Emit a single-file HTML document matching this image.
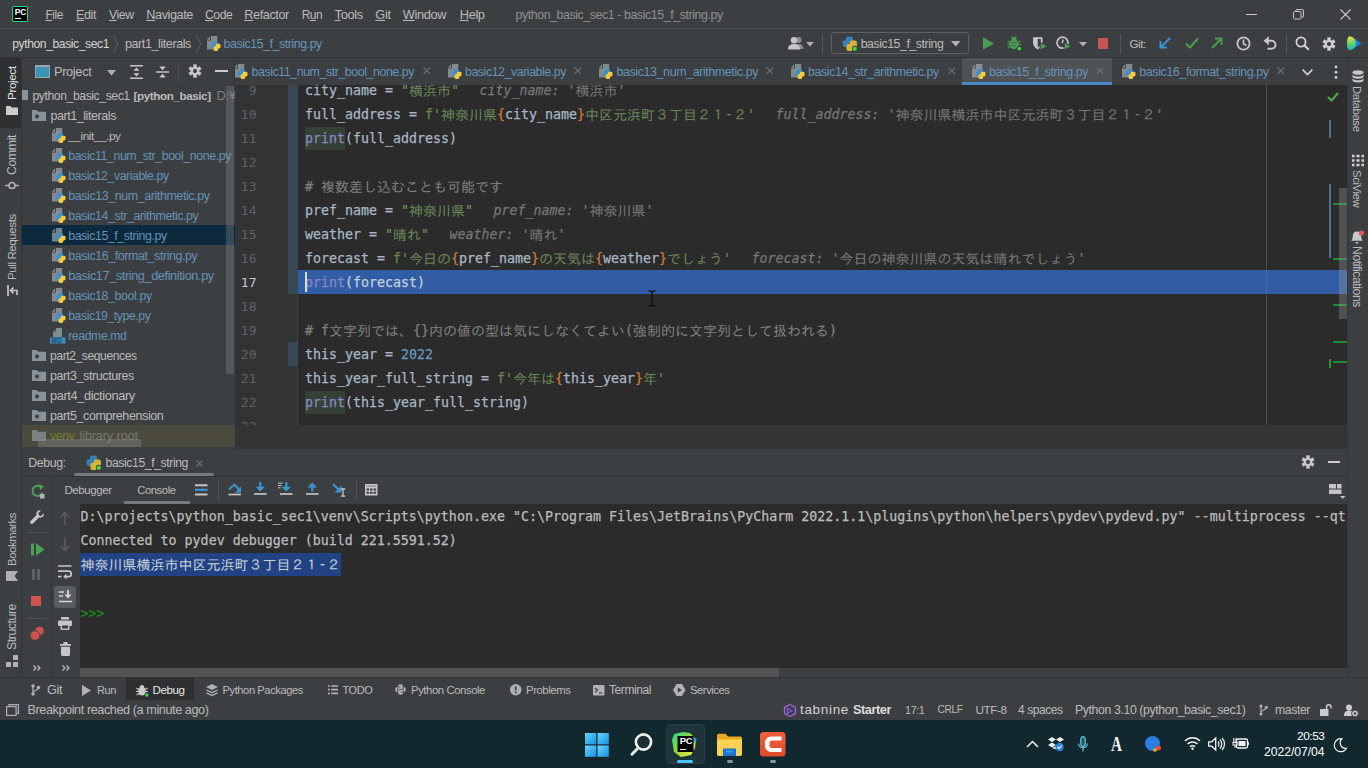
<!DOCTYPE html>
<html lang="ja">
<head>
<meta charset="utf-8">
<title>python_basic_sec1 - basic15_f_string.py</title>
<style>
*{box-sizing:border-box;margin:0;padding:0}
html,body{width:1368px;height:768px;overflow:hidden;background:#3c3f41}
body{position:relative;font-family:"Liberation Sans","Noto Sans CJK JP",sans-serif;font-size:12.5px;color:#bbbbbb;line-height:1}
.abs{position:absolute}
.t{position:absolute;white-space:nowrap;line-height:16px;height:16px}
u{text-decoration:underline;text-underline-offset:1px;text-decoration-thickness:1px}
svg{position:absolute;overflow:visible}
.ln{position:absolute;text-align:right;font-family:"DejaVu Sans Mono","Liberation Mono",monospace;font-size:13px;color:#606366;height:24px;line-height:26px;letter-spacing:0}
.cl{position:absolute;left:70px;height:24px;line-height:26px;white-space:pre;font-family:"DejaVu Sans Mono","Liberation Mono","Noto Sans CJK JP",monospace;font-size:13.29px;letter-spacing:0;color:#a9b7c6;-webkit-text-stroke:0.25px}
.j{font-family:"Liberation Mono","IPAGothic","Noto Sans CJK JP",monospace;font-size:14px;letter-spacing:0;font-weight:400;line-height:0;vertical-align:-0.5px;-webkit-text-stroke:0}
.s{color:#6a8759}.k{color:#cc7832}.c{color:#808080}.n{color:#6897bb}.b{color:#8888c6}
.iv{color:#787878;font-style:italic}
.ivv{color:#787878}
.con{position:absolute;left:80px;height:24px;line-height:26px;white-space:pre;font-family:"DejaVu Sans Mono","Liberation Mono","Noto Sans CJK JP",monospace;font-size:13.29px;letter-spacing:0.012px;color:#bbbbbb;-webkit-text-stroke:0.25px}
</style>
</head>
<body>
<div class="abs" style="left:0.0px;top:0.0px;width:1368.0px;height:29.0px;background:#3c3f41;"></div>
<div class="abs" style="left:12.0px;top:6.0px;width:16.0px;height:16.0px;background:#000;border:1px solid #21d789;border-radius:1px"></div>
<div id="t0" class="t" style="left:14.8px;top:8.3px;color:#ffffff;font-size:8.6px;font-weight:700;letter-spacing:-0.277px;line-height:9px;height:9px;">PC</div>
<div class="abs" style="left:14.9px;top:17.6px;width:5.8px;height:1.3px;background:#ffffff;"></div>
<div id="t1" class="t" style="left:45.4px;top:6.8px;color:#bbbbbb;font-size:11.96px;font-weight:400;letter-spacing:-0.420px;line-height:16px;height:16px;"><u>F</u>ile</div>
<div id="t2" class="t" style="left:76.0px;top:6.8px;color:#bbbbbb;font-size:12.58px;font-weight:400;letter-spacing:-0.420px;line-height:16px;height:16px;"><u>E</u>dit</div>
<div id="t3" class="t" style="left:109.0px;top:6.8px;color:#bbbbbb;font-size:12.23px;font-weight:400;letter-spacing:-0.420px;line-height:16px;height:16px;"><u>V</u>iew</div>
<div id="t4" class="t" style="left:146.3px;top:6.8px;color:#bbbbbb;font-size:12.68px;font-weight:400;letter-spacing:-0.420px;line-height:16px;height:16px;"><u>N</u>avigate</div>
<div id="t5" class="t" style="left:205.0px;top:6.8px;color:#bbbbbb;font-size:12.16px;font-weight:400;letter-spacing:-0.420px;line-height:16px;height:16px;"><u>C</u>ode</div>
<div id="t6" class="t" style="left:244.3px;top:6.8px;color:#bbbbbb;font-size:12.69px;font-weight:400;letter-spacing:-0.420px;line-height:16px;height:16px;"><u>R</u>efactor</div>
<div id="t7" class="t" style="left:301.7px;top:6.8px;color:#bbbbbb;font-size:11.85px;font-weight:400;letter-spacing:-0.420px;line-height:16px;height:16px;">R<u>u</u>n</div>
<div id="t8" class="t" style="left:334.6px;top:6.8px;color:#bbbbbb;font-size:12.8px;font-weight:400;letter-spacing:-0.318px;line-height:16px;height:16px;"><u>T</u>ools</div>
<div id="t9" class="t" style="left:375.3px;top:6.8px;color:#bbbbbb;font-size:12.8px;font-weight:400;letter-spacing:-0.292px;line-height:16px;height:16px;"><u>G</u>it</div>
<div id="t10" class="t" style="left:402.8px;top:6.8px;color:#bbbbbb;font-size:12.8px;font-weight:400;letter-spacing:-0.355px;line-height:16px;height:16px;"><u>W</u>indow</div>
<div id="t11" class="t" style="left:459.8px;top:6.8px;color:#bbbbbb;font-size:12.8px;font-weight:400;letter-spacing:-0.382px;line-height:16px;height:16px;"><u>H</u>elp</div>
<div id="t12" class="t" style="left:515.5px;top:6.8px;color:#8f9192;font-size:12.38px;font-weight:400;letter-spacing:-0.420px;line-height:16px;height:16px;">python_basic_sec1 - basic15_f_string.py</div>
<div class="abs" style="left:1245.5px;top:14.0px;width:11.0px;height:1.0px;background:#c8c8c8;"></div>
<svg style="left:1293.0px;top:9.0px;" width="11" height="11" viewBox="0 0 11 11"><rect x="0.500" y="2.500" width="7.500" height="7.500" rx="1.200" stroke="#c8c8c8" fill="none" stroke-width="1"/><path d="M2.800 2.500v-.800a1.200 1.200 0 0 1 1.200-1.200h5a1.500 1.500 0 0 1 1.500 1.500v5a1.200 1.200 0 0 1-1.200 1.200h-1.200" stroke="#c8c8c8" fill="none" stroke-width="1"/></svg>
<svg style="left:1340.0px;top:9.0px;" width="11" height="11" viewBox="0 0 11 11"><path d="M0.500 0.500l10 10M10.500 0.500l-10 10" stroke="#c8c8c8" fill="none" stroke-width="1.100"/></svg>
<div class="abs" style="left:0.0px;top:28.0px;width:1368.0px;height:1.0px;background:#505355;"></div>
<div id="t13" class="t" style="left:12.3px;top:35.6px;color:#d4d4d4;font-size:12.13px;font-weight:400;letter-spacing:-0.420px;line-height:16px;height:16px;">python_basic_sec1</div>
<svg style="left:111.5px;top:35.0px;" width="7" height="18" viewBox="0 0 7 18"><path d="M1 0.500L6 9L1 17.500" stroke="#5d6062" fill="none" stroke-width="1"/></svg>
<div id="t14" class="t" style="left:125.0px;top:35.6px;color:#bbbbbb;font-size:12.56px;font-weight:400;letter-spacing:-0.420px;line-height:16px;height:16px;">part1_literals</div>
<svg style="left:194.5px;top:35.0px;" width="7" height="18" viewBox="0 0 7 18"><path d="M1 0.500L6 9L1 17.500" stroke="#5d6062" fill="none" stroke-width="1"/></svg>
<svg style="left:206.0px;top:35.7px;" width="16" height="16" viewBox="0 0 16 16"><path d="M5 0H11.200V13.600H1V4.600H5Z" fill="#9aa7b0" opacity=".72"/><path d="M0.900 3.700L4.100 0.300V3.700Z" fill="#9aa7b0" opacity=".72"/><rect x="7.200" y="5" width="4.600" height="5" rx="1.400" fill="#3e8fcb"/><rect x="4.900" y="7.400" width="5" height="4.400" rx="1.400" fill="#3e8fcb"/><rect x="7.600" y="10.200" width="4.600" height="4.800" rx="1.400" fill="#f7cb3b"/><rect x="9.600" y="7.800" width="4.900" height="4.600" rx="1.400" fill="#f7cb3b"/><rect x="7.200" y="7.400" width="2.400" height="2.600" fill="#3e8fcb"/></svg>
<div id="t15" class="t" style="left:223.6px;top:35.6px;color:#6793b8;font-size:12.33px;font-weight:400;letter-spacing:-0.420px;line-height:16px;height:16px;">basic15_f_string.py</div>
<svg style="left:787.5px;top:36.0px;" width="16" height="14" viewBox="0 0 16 14"><circle cx="10.500" cy="4" r="3" fill="#8a8d8f"/><path d="M5.500 13c0-3.500 2-5 5-5s5 1.500 5 5z" fill="#8a8d8f"/><circle cx="6" cy="4.200" r="3.200" fill="#c4c6c7"/><path d="M0 13.500c0-4 2.500-5.500 6-5.500s6 1.500 6 5.500z" fill="#c4c6c7"/></svg>
<svg style="left:806.0px;top:41.5px;" width="8" height="5" viewBox="0 0 8 5"><path d="M0 0h8l-4 4.500z" fill="#afb1b3"/></svg>
<div class="abs" style="left:821.5px;top:34.0px;width:1.0px;height:20.0px;background:#515456;"></div>
<div class="abs" style="left:831.0px;top:32.0px;width:138.0px;height:22.0px;background:transparent;border:1px solid #5e6163;border-radius:3px"></div>
<svg style="left:841.5px;top:36.0px;" width="15.5" height="15.5" viewBox="0 0 14 14"><rect x="3.500" y="0.500" width="6.500" height="7" rx="2" fill="#3e7fb3"/><rect x="0.500" y="3.800" width="7" height="6.200" rx="2" fill="#3e7fb3"/><rect x="4" y="7" width="6.500" height="6.500" rx="2" fill="#d9b43a"/><rect x="7" y="4" width="6.500" height="6.500" rx="2" fill="#d9b43a"/><rect x="3.500" y="3.800" width="3.500" height="3.200" fill="#3e7fb3"/><circle cx="11.500" cy="11.500" r="2.600" fill="#3c3f41"/><circle cx="11.500" cy="11.500" r="1.900" fill="#3fe03f"/></svg>
<div id="t16" class="t" style="left:860.7px;top:35.6px;color:#bbbbbb;font-size:12.28px;font-weight:400;letter-spacing:-0.420px;line-height:16px;height:16px;">basic15_f_string</div>
<svg style="left:950.5px;top:41.0px;" width="10" height="6" viewBox="0 0 10 6"><path d="M0 0h9.500l-4.750 5.500z" fill="#afb1b3"/></svg>
<svg style="left:983.0px;top:37.0px;" width="11" height="13" viewBox="0 0 11 13"><path d="M0 0.300L11 6.500L0 12.700z" fill="#499c54"/></svg>
<svg style="left:1007.0px;top:36.0px;" width="15" height="15" viewBox="0 0 15 15"><ellipse cx="7" cy="8.200" rx="4.500" ry="5" fill="#499c54"/><ellipse cx="7" cy="3.200" rx="2.600" ry="2" fill="#499c54"/><path d="M0.800 5l2.500 1.500M13.200 5l-2.500 1.500M0.300 8.500h3M13.700 8.500h-3M0.800 12l2.500-1.500M13.200 12l-2.500-1.500M4.800 0.300l1.200 1.700M9.200 0.300l-1.200 1.700" stroke="#499c54" stroke-width="1.300" fill="none"/><path d="M4.500 6.800h5M4.500 9.600h5" stroke="#3c3f41" stroke-width="1" opacity=".55"/><circle cx="12.300" cy="12.800" r="2.500" fill="#3c3f41"/><circle cx="12.300" cy="12.800" r="1.800" fill="#2fe03a"/></svg>
<svg style="left:1032.0px;top:36.0px;" width="17" height="16" viewBox="0 0 17 16"><path d="M1 1.200h9.500v5c0 3.500-2 5.700-4.750 7.300c-2.750-1.600-4.750-3.800-4.750-7.300z" fill="#c4c6c7"/><path d="M5.750 3h3v3.500c0 2.200-1.200 3.800-3 5z" fill="#3c3f41"/><path d="M7.500 5.500l8.500 4.800l-8.500 4.800z" fill="#3c3f41"/><path d="M8.700 7.300l6 3l-6 3.300z" fill="#499c54"/></svg>
<svg style="left:1056.0px;top:36.0px;" width="17" height="16" viewBox="0 0 17 16"><circle cx="6.500" cy="6.700" r="5.500" stroke="#c4c6c7" stroke-width="1.700" fill="none"/><path d="M7.200 3.500l-1 3.700" stroke="#c4c6c7" stroke-width="1.400" fill="none"/><path d="M7.500 5.500l8.500 4.800l-8.500 4.800z" fill="#3c3f41"/><path d="M8.700 7.300l6 3l-6 3.300z" fill="#499c54"/></svg>
<svg style="left:1079.0px;top:41.5px;" width="8" height="5" viewBox="0 0 8 5"><path d="M0 0h8l-4 4.500z" fill="#afb1b3"/></svg>
<div class="abs" style="left:1097.5px;top:38.0px;width:10.5px;height:10.5px;background:#c75450;"></div>
<div class="abs" style="left:1120.0px;top:34.0px;width:1.0px;height:20.0px;background:#515456;"></div>
<div id="t17" class="t" style="left:1129.4px;top:35.6px;color:#bbbbbb;font-size:11.68px;font-weight:400;letter-spacing:-0.420px;line-height:16px;height:16px;">Git:</div>
<svg style="left:1159.0px;top:37.0px;" width="12" height="12" viewBox="0 0 12 12"><path d="M11 1L2 10M1.500 4v6.500h6.500" stroke="#3a93d6" stroke-width="2" fill="none"/></svg>
<svg style="left:1185.0px;top:37.0px;" width="14" height="12" viewBox="0 0 14 12"><path d="M1 6.500l4 4L13 1.500" stroke="#499c54" stroke-width="2.200" fill="none"/></svg>
<svg style="left:1211.0px;top:37.0px;" width="12" height="12" viewBox="0 0 12 12"><path d="M1 11L10 2M4 1.500h6.500v6.500" stroke="#499c54" stroke-width="2" fill="none"/></svg>
<svg style="left:1235.5px;top:36.0px;" width="15" height="15" viewBox="0 0 15 15"><circle cx="7.500" cy="7.500" r="6.100" stroke="#c4c6c7" stroke-width="1.800" fill="none"/><path d="M7.500 3.500v4.300l3 1.700" stroke="#c4c6c7" stroke-width="1.700" fill="none"/></svg>
<svg style="left:1263.0px;top:36.0px;" width="14" height="14" viewBox="0 0 14 14"><path d="M3.500 4.800h5a4 4 0 0 1 0 8h-4" stroke="#c4c6c7" stroke-width="1.900" fill="none"/><path d="M5.800 0.300L0.500 4.800l5.300 4.500z" fill="#c4c6c7"/></svg>
<div class="abs" style="left:1285.5px;top:34.0px;width:1.0px;height:20.0px;background:#515456;"></div>
<svg style="left:1295.0px;top:36.0px;" width="15" height="15" viewBox="0 0 15 15"><circle cx="6" cy="6" r="4.600" stroke="#d0d2d3" stroke-width="1.800" fill="none"/><path d="M9.300 9.300l4.500 4.500" stroke="#d0d2d3" stroke-width="2.200" fill="none"/></svg>
<svg style="left:1321.5px;top:36.5px;" width="14" height="14" viewBox="0 0 14 14"><path fill="#d0d2d3" fill-rule="evenodd" stroke="#d0d2d3" stroke-width=".3" stroke-linejoin="round" d="M5.49 2.98L5.37 0.61L8.63 0.61L8.51 2.98L9.73 3.68L11.72 2.39L13.35 5.22L11.24 6.30L11.24 7.70L13.35 8.78L11.72 11.61L9.73 10.32L8.51 11.02L8.63 13.39L5.37 13.39L5.49 11.02L4.27 10.32L2.28 11.61L0.65 8.78L2.76 7.70L2.76 6.30L0.65 5.22L2.28 2.39L4.27 3.68ZM7 4.80a2.20 2.20 0 1 0 0 4.40a2.20 2.20 0 1 0 0 -4.40Z"/></svg>
<svg style="left:1346.5px;top:35.8px;" width="14.5" height="14.5" viewBox="0 0 14.5 14.5"><defs><linearGradient id="sp" x1="0" y1="0" x2="0" y2="1"><stop offset="0" stop-color="#e8e43a"/><stop offset=".55" stop-color="#5fd06a"/><stop offset="1" stop-color="#17b5c8"/></linearGradient></defs><path d="M5.500 1.200L14.500 7.200L5.500 13.500z" fill="#1b7fe0"/><path d="M1.800 0.300c4 0 7 3 7 7s-3 7-7 7c-1.500-2-1.800-4.500-1.800-7s.300-5 1.800-7z" fill="url(#sp)"/></svg>
<div class="abs" style="left:0.0px;top:57.0px;width:1368.0px;height:1.0px;background:#323536;"></div>
<div class="abs" id="tabs" style="left:235px;top:58px;width:1112px;height:27px;background:#3c3f41;overflow:hidden">
<div class="abs" style="left:726.5px;top:0.0px;width:150.0px;height:27.0px;background:#4e5254;"></div>
<div class="abs" style="left:726.5px;top:24.0px;width:150.0px;height:3.0px;background:#4a88c7;"></div>
<svg style="left:-2.0px;top:6.2px;" width="16" height="16" viewBox="0 0 16 16"><path d="M5 0H11.200V13.600H1V4.600H5Z" fill="#9aa7b0" opacity=".72"/><path d="M0.900 3.700L4.100 0.300V3.700Z" fill="#9aa7b0" opacity=".72"/><rect x="7.200" y="5" width="4.600" height="5" rx="1.400" fill="#3e8fcb"/><rect x="4.900" y="7.400" width="5" height="4.400" rx="1.400" fill="#3e8fcb"/><rect x="7.600" y="10.200" width="4.600" height="4.800" rx="1.400" fill="#f7cb3b"/><rect x="9.600" y="7.800" width="4.900" height="4.600" rx="1.400" fill="#f7cb3b"/><rect x="7.200" y="7.400" width="2.400" height="2.600" fill="#3e8fcb"/></svg>
<div id="t18" class="t" style="left:16.5px;top:5.6px;color:#6793b8;font-size:12.36px;font-weight:400;letter-spacing:-0.420px;line-height:16px;height:16px;">basic11_num_str_bool_none.py</div>
<svg style="left:187.5px;top:9.0px;" width="7.5" height="7.5" viewBox="0 0 7.5 7.5"><path d="M0.500 0.500L7 7M7 0.500L0.500 7" stroke="#6a6e71" stroke-width="1.100" fill="none"/></svg>
<svg style="left:211.5px;top:6.2px;" width="16" height="16" viewBox="0 0 16 16"><path d="M5 0H11.200V13.600H1V4.600H5Z" fill="#9aa7b0" opacity=".72"/><path d="M0.900 3.700L4.100 0.300V3.700Z" fill="#9aa7b0" opacity=".72"/><rect x="7.200" y="5" width="4.600" height="5" rx="1.400" fill="#3e8fcb"/><rect x="4.900" y="7.400" width="5" height="4.400" rx="1.400" fill="#3e8fcb"/><rect x="7.600" y="10.200" width="4.600" height="4.800" rx="1.400" fill="#f7cb3b"/><rect x="9.600" y="7.800" width="4.900" height="4.600" rx="1.400" fill="#f7cb3b"/><rect x="7.200" y="7.400" width="2.400" height="2.600" fill="#3e8fcb"/></svg>
<div id="t19" class="t" style="left:230.0px;top:5.6px;color:#6793b8;font-size:12.33px;font-weight:400;letter-spacing:-0.420px;line-height:16px;height:16px;">basic12_variable.py</div>
<svg style="left:338.5px;top:9.0px;" width="7.5" height="7.5" viewBox="0 0 7.5 7.5"><path d="M0.500 0.500L7 7M7 0.500L0.500 7" stroke="#6a6e71" stroke-width="1.100" fill="none"/></svg>
<svg style="left:362.5px;top:6.2px;" width="16" height="16" viewBox="0 0 16 16"><path d="M5 0H11.200V13.600H1V4.600H5Z" fill="#9aa7b0" opacity=".72"/><path d="M0.900 3.700L4.100 0.300V3.700Z" fill="#9aa7b0" opacity=".72"/><rect x="7.200" y="5" width="4.600" height="5" rx="1.400" fill="#3e8fcb"/><rect x="4.900" y="7.400" width="5" height="4.400" rx="1.400" fill="#3e8fcb"/><rect x="7.600" y="10.200" width="4.600" height="4.800" rx="1.400" fill="#f7cb3b"/><rect x="9.600" y="7.800" width="4.900" height="4.600" rx="1.400" fill="#f7cb3b"/><rect x="7.200" y="7.400" width="2.400" height="2.600" fill="#3e8fcb"/></svg>
<div id="t20" class="t" style="left:381.5px;top:5.6px;color:#6793b8;font-size:12.49px;font-weight:400;letter-spacing:-0.420px;line-height:16px;height:16px;">basic13_num_arithmetic.py</div>
<svg style="left:530.5px;top:9.0px;" width="7.5" height="7.5" viewBox="0 0 7.5 7.5"><path d="M0.500 0.500L7 7M7 0.500L0.500 7" stroke="#6a6e71" stroke-width="1.100" fill="none"/></svg>
<svg style="left:555.0px;top:6.2px;" width="16" height="16" viewBox="0 0 16 16"><path d="M5 0H11.200V13.600H1V4.600H5Z" fill="#9aa7b0" opacity=".72"/><path d="M0.900 3.700L4.100 0.300V3.700Z" fill="#9aa7b0" opacity=".72"/><rect x="7.200" y="5" width="4.600" height="5" rx="1.400" fill="#3e8fcb"/><rect x="4.900" y="7.400" width="5" height="4.400" rx="1.400" fill="#3e8fcb"/><rect x="7.600" y="10.200" width="4.600" height="4.800" rx="1.400" fill="#f7cb3b"/><rect x="9.600" y="7.800" width="4.900" height="4.600" rx="1.400" fill="#f7cb3b"/><rect x="7.200" y="7.400" width="2.400" height="2.600" fill="#3e8fcb"/></svg>
<div id="t21" class="t" style="left:573.0px;top:5.6px;color:#6793b8;font-size:12.48px;font-weight:400;letter-spacing:-0.420px;line-height:16px;height:16px;">basic14_str_arithmetic.py</div>
<svg style="left:712.5px;top:9.0px;" width="7.5" height="7.5" viewBox="0 0 7.5 7.5"><path d="M0.500 0.500L7 7M7 0.500L0.500 7" stroke="#6a6e71" stroke-width="1.100" fill="none"/></svg>
<svg style="left:735.5px;top:6.2px;" width="16" height="16" viewBox="0 0 16 16"><path d="M5 0H11.200V13.600H1V4.600H5Z" fill="#9aa7b0" opacity=".72"/><path d="M0.900 3.700L4.100 0.300V3.700Z" fill="#9aa7b0" opacity=".72"/><rect x="7.200" y="5" width="4.600" height="5" rx="1.400" fill="#3e8fcb"/><rect x="4.900" y="7.400" width="5" height="4.400" rx="1.400" fill="#3e8fcb"/><rect x="7.600" y="10.200" width="4.600" height="4.800" rx="1.400" fill="#f7cb3b"/><rect x="9.600" y="7.800" width="4.900" height="4.600" rx="1.400" fill="#f7cb3b"/><rect x="7.200" y="7.400" width="2.400" height="2.600" fill="#3e8fcb"/></svg>
<div id="t22" class="t" style="left:754.0px;top:5.6px;color:#6793b8;font-size:12.42px;font-weight:400;letter-spacing:-0.420px;line-height:16px;height:16px;">basic15_f_string.py</div>
<svg style="left:860.5px;top:9.0px;" width="7.5" height="7.5" viewBox="0 0 7.5 7.5"><path d="M0.500 0.500L7 7M7 0.500L0.500 7" stroke="#6a6e71" stroke-width="1.100" fill="none"/></svg>
<svg style="left:886.0px;top:6.2px;" width="16" height="16" viewBox="0 0 16 16"><path d="M5 0H11.200V13.600H1V4.600H5Z" fill="#9aa7b0" opacity=".72"/><path d="M0.900 3.700L4.100 0.300V3.700Z" fill="#9aa7b0" opacity=".72"/><rect x="7.200" y="5" width="4.600" height="5" rx="1.400" fill="#3e8fcb"/><rect x="4.900" y="7.400" width="5" height="4.400" rx="1.400" fill="#3e8fcb"/><rect x="7.600" y="10.200" width="4.600" height="4.800" rx="1.400" fill="#f7cb3b"/><rect x="9.600" y="7.800" width="4.900" height="4.600" rx="1.400" fill="#f7cb3b"/><rect x="7.200" y="7.400" width="2.400" height="2.600" fill="#3e8fcb"/></svg>
<div id="t23" class="t" style="left:904.3px;top:5.6px;color:#6793b8;font-size:12.49px;font-weight:400;letter-spacing:-0.420px;line-height:16px;height:16px;">basic16_format_string.py</div>
<svg style="left:1041.5px;top:9.0px;" width="7.5" height="7.5" viewBox="0 0 7.5 7.5"><path d="M0.500 0.500L7 7M7 0.500L0.500 7" stroke="#6a6e71" stroke-width="1.100" fill="none"/></svg>
<svg style="left:1067.0px;top:10.5px;" width="11" height="7" viewBox="0 0 11 7"><path d="M0.700 0.700l4.800 4.800l4.800-4.800" stroke="#d0d2d3" stroke-width="1.700" fill="none"/></svg>
<svg style="left:1098.5px;top:7.0px;" width="4" height="15" viewBox="0 0 4 15"><circle cx="2" cy="2" r="1.400" fill="#d0d2d3"/><circle cx="2" cy="7.200" r="1.400" fill="#d0d2d3"/><circle cx="2" cy="12.400" r="1.400" fill="#d0d2d3"/></svg>
</div>
<div class="abs" style="left:0.0px;top:58.0px;width:22.0px;height:620.0px;background:#3c3f41;"></div>
<div class="abs" style="left:0.0px;top:58.0px;width:21.0px;height:70.0px;background:#2d2f30;"></div>
<div class="abs" style="left:21.0px;top:58.0px;width:1.0px;height:620.0px;background:#323536;"></div>
<div id="t24" class="t" style="left:3.5px;top:100.0px;transform:rotate(-90deg);transform-origin:0 0;color:#e6e6e6;font-size:11.74px;font-weight:400;letter-spacing:-0.420px">Project</div>
<svg style="left:5.5px;top:106.0px;" width="12" height="9" viewBox="0 0 12 9"><path d="M0 0h4.500l1.200 1.500H12V9H0z" fill="#c9cbcc"/></svg>
<div id="t25" class="t" style="left:3.5px;top:175.0px;transform:rotate(-90deg);transform-origin:0 0;color:#bbbbbb;font-size:12.3px;font-weight:400;letter-spacing:-0.393px">Commit</div>
<svg style="left:4.5px;top:181.0px;" width="14" height="9" viewBox="0 0 14 9"><circle cx="7" cy="4.500" r="3" stroke="#afb1b3" stroke-width="1.700" fill="none"/><path d="M0 4.500h3.500M10.500 4.500H14" stroke="#afb1b3" stroke-width="1.700"/></svg>
<div id="t26" class="t" style="left:3.5px;top:279.5px;transform:rotate(-90deg);transform-origin:0 0;color:#bbbbbb;font-size:11.57px;font-weight:400;letter-spacing:-0.420px">Pull Requests</div>
<svg style="left:6.5px;top:285.0px;" width="11" height="11" viewBox="0 0 11 11"><path d="M1 0v11M10 10V5.500H3.500M6.500 2.500L3.500 5.500l3 3" stroke="#c4c6c7" stroke-width="1.700" fill="none"/></svg>
<div id="t27" class="t" style="left:3.5px;top:566.0px;transform:rotate(-90deg);transform-origin:0 0;color:#bbbbbb;font-size:11.35px;font-weight:400;letter-spacing:-0.420px">Bookmarks</div>
<svg style="left:6.5px;top:570.0px;" width="10" height="12" viewBox="0 0 10 12"><path d="M0 0h10v12l-5-3.500l-5 3.500z" fill="#afb1b3" transform="rotate(-90 5 6)"/></svg>
<div id="t28" class="t" style="left:3.5px;top:650.0px;transform:rotate(-90deg);transform-origin:0 0;color:#bbbbbb;font-size:12.27px;font-weight:400;letter-spacing:-0.420px">Structure</div>
<svg style="left:5.5px;top:655.0px;" width="12" height="12" viewBox="0 0 12 12"><rect x="0" y="7" width="5" height="5" fill="#afb1b3"/><rect x="7" y="7" width="5" height="5" fill="#afb1b3"/><rect x="7" y="0" width="5" height="5" fill="#afb1b3"/></svg>
<div class="abs" id="project" style="left:22px;top:58px;width:213px;height:389px;background:#3c3f41;overflow:hidden">
<svg style="left:13.0px;top:7.0px;" width="15" height="13" viewBox="0 0 15 13"><rect x="0.500" y="0.500" width="14" height="12" fill="#3b93b8" stroke="#9aa7b0" stroke-width="1"/><rect x="0.500" y="0.500" width="14" height="1.500" fill="#9aa7b0"/></svg>
<div id="t29" class="t" style="left:32.0px;top:5.8px;color:#bbbbbb;font-size:12.8px;font-weight:400;letter-spacing:-0.347px;line-height:16px;height:16px;">Project</div>
<svg style="left:84.5px;top:11.5px;" width="9" height="5.5" viewBox="0 0 9 5.5"><path d="M0 0h9l-4.500 5.500z" fill="#afb1b3"/></svg>
<svg style="left:107.5px;top:6.5px;" width="13" height="14" viewBox="0 0 13 14"><path d="M0 0.800h13M0 13.200h13" stroke="#c4c6c7" stroke-width="1.500"/><path d="M6.500 2.500l3.200 3.200h-6.400zM6.500 11.500l3.200-3.200h-6.400z" fill="#c4c6c7"/></svg>
<svg style="left:134.0px;top:6.5px;" width="13" height="14" viewBox="0 0 13 14"><path d="M0 7h13" stroke="#c4c6c7" stroke-width="1.500"/><path d="M6.500 5.200l3.200-3.700h-6.400zM6.500 8.800l3.200 3.700h-6.400z" fill="#c4c6c7"/></svg>
<div class="abs" style="left:156.0px;top:4.0px;width:1.0px;height:20.0px;background:#4b4e50;"></div>
<svg style="left:166.1px;top:6.0px;" width="14" height="14" viewBox="0 0 14 14"><path fill="#c9cbcc" fill-rule="evenodd" stroke="#c9cbcc" stroke-width=".3" stroke-linejoin="round" d="M5.49 2.98L5.37 0.61L8.63 0.61L8.51 2.98L9.73 3.68L11.72 2.39L13.35 5.22L11.24 6.30L11.24 7.70L13.35 8.78L11.72 11.61L9.73 10.32L8.51 11.02L8.63 13.39L5.37 13.39L5.49 11.02L4.27 10.32L2.28 11.61L0.65 8.78L2.76 7.70L2.76 6.30L0.65 5.22L2.28 2.39L4.27 3.68ZM7 4.80a2.20 2.20 0 1 0 0 4.40a2.20 2.20 0 1 0 0 -4.40Z"/></svg>
<div class="abs" style="left:193.0px;top:12.0px;width:12.5px;height:2.0px;background:#c9cbcc;"></div>
<div class="abs" style="left:212.0px;top:0.0px;width:1.0px;height:27.0px;background:#323536;"></div>
<div class="abs" style="left:0.0px;top:27.0px;width:213.0px;height:1.0px;background:#35383a;"></div>
<div class="abs" style="left:0.0px;top:167.0px;width:213.0px;height:20.0px;background:#0d293e;"></div>
<div class="abs" style="left:0.0px;top:367.0px;width:213.0px;height:22.0px;background:#4b4a3d;"></div>
<div class="abs" style="left:0.0px;top:32.0px;width:5.5px;height:10.0px;background:#9aa7b0;opacity:.8"></div>
<div id="t30" class="t" style="left:10.5px;top:29.6px;color:#bbbbbb;font-size:12.19px;font-weight:400;letter-spacing:-0.420px;line-height:16px;height:16px;">python_basic_sec1</div>
<div id="t31" class="t" style="left:111.6px;top:29.6px;color:#bbbbbb;font-size:11.66px;font-weight:700;letter-spacing:-0.420px;line-height:16px;height:16px;">[python_basic]</div>
<div id="t32" class="t" style="left:194.6px;top:29.6px;color:#7d7f80;font-size:12.8px;font-weight:400;letter-spacing:-0.174px;line-height:16px;height:16px;">D:¥</div>
<svg style="left:9.0px;top:50.0px;" width="16" height="15" viewBox="0 0 16 15"><path d="M1 2h4.800l1.400 1.800H15V13H1Z" fill="#9aa7b0" opacity="0.8"/><circle cx="6" cy="8.400" r="2" fill="#3c3f41"/></svg>
<div id="t33" class="t" style="left:28.4px;top:49.6px;color:#bbbbbb;font-size:12.49px;font-weight:400;letter-spacing:-0.420px;line-height:16px;height:16px;">part1_literals</div>
<svg style="left:28.6px;top:70.0px;" width="16" height="16" viewBox="0 0 16 16"><path d="M5 0H11.200V13.600H1V4.600H5Z" fill="#9aa7b0" opacity=".72"/><path d="M0.900 3.700L4.100 0.300V3.700Z" fill="#9aa7b0" opacity=".72"/><rect x="7.200" y="5" width="4.600" height="5" rx="1.400" fill="#3e8fcb"/><rect x="4.900" y="7.400" width="5" height="4.400" rx="1.400" fill="#3e8fcb"/><rect x="7.600" y="10.200" width="4.600" height="4.800" rx="1.400" fill="#f7cb3b"/><rect x="9.600" y="7.800" width="4.900" height="4.600" rx="1.400" fill="#f7cb3b"/><rect x="7.200" y="7.400" width="2.400" height="2.600" fill="#3e8fcb"/></svg>
<div id="t34" class="t" style="left:46.2px;top:69.6px;color:#bbbbbb;font-size:11.79px;font-weight:400;letter-spacing:-0.420px;line-height:16px;height:16px;">__init__.py</div>
<svg style="left:28.6px;top:90.0px;" width="16" height="16" viewBox="0 0 16 16"><path d="M5 0H11.200V13.600H1V4.600H5Z" fill="#9aa7b0" opacity=".72"/><path d="M0.900 3.700L4.100 0.300V3.700Z" fill="#9aa7b0" opacity=".72"/><rect x="7.200" y="5" width="4.600" height="5" rx="1.400" fill="#3e8fcb"/><rect x="4.900" y="7.400" width="5" height="4.400" rx="1.400" fill="#3e8fcb"/><rect x="7.600" y="10.200" width="4.600" height="4.800" rx="1.400" fill="#f7cb3b"/><rect x="9.600" y="7.800" width="4.900" height="4.600" rx="1.400" fill="#f7cb3b"/><rect x="7.200" y="7.400" width="2.400" height="2.600" fill="#3e8fcb"/></svg>
<div id="t35" class="t" style="left:46.2px;top:89.6px;color:#6592b5;font-size:12.38px;font-weight:400;letter-spacing:-0.420px;line-height:16px;height:16px;">basic11_num_str_bool_none.py</div>
<svg style="left:28.6px;top:110.0px;" width="16" height="16" viewBox="0 0 16 16"><path d="M5 0H11.200V13.600H1V4.600H5Z" fill="#9aa7b0" opacity=".72"/><path d="M0.900 3.700L4.100 0.300V3.700Z" fill="#9aa7b0" opacity=".72"/><rect x="7.200" y="5" width="4.600" height="5" rx="1.400" fill="#3e8fcb"/><rect x="4.900" y="7.400" width="5" height="4.400" rx="1.400" fill="#3e8fcb"/><rect x="7.600" y="10.200" width="4.600" height="4.800" rx="1.400" fill="#f7cb3b"/><rect x="9.600" y="7.800" width="4.900" height="4.600" rx="1.400" fill="#f7cb3b"/><rect x="7.200" y="7.400" width="2.400" height="2.600" fill="#3e8fcb"/></svg>
<div id="t36" class="t" style="left:46.2px;top:109.6px;color:#6592b5;font-size:12.27px;font-weight:400;letter-spacing:-0.420px;line-height:16px;height:16px;">basic12_variable.py</div>
<svg style="left:28.6px;top:130.0px;" width="16" height="16" viewBox="0 0 16 16"><path d="M5 0H11.200V13.600H1V4.600H5Z" fill="#9aa7b0" opacity=".72"/><path d="M0.900 3.700L4.100 0.300V3.700Z" fill="#9aa7b0" opacity=".72"/><rect x="7.200" y="5" width="4.600" height="5" rx="1.400" fill="#3e8fcb"/><rect x="4.900" y="7.400" width="5" height="4.400" rx="1.400" fill="#3e8fcb"/><rect x="7.600" y="10.200" width="4.600" height="4.800" rx="1.400" fill="#f7cb3b"/><rect x="9.600" y="7.800" width="4.900" height="4.600" rx="1.400" fill="#f7cb3b"/><rect x="7.200" y="7.400" width="2.400" height="2.600" fill="#3e8fcb"/></svg>
<div id="t37" class="t" style="left:46.2px;top:129.6px;color:#6592b5;font-size:12.48px;font-weight:400;letter-spacing:-0.420px;line-height:16px;height:16px;">basic13_num_arithmetic.py</div>
<svg style="left:28.6px;top:150.0px;" width="16" height="16" viewBox="0 0 16 16"><path d="M5 0H11.200V13.600H1V4.600H5Z" fill="#9aa7b0" opacity=".72"/><path d="M0.900 3.700L4.100 0.300V3.700Z" fill="#9aa7b0" opacity=".72"/><rect x="7.200" y="5" width="4.600" height="5" rx="1.400" fill="#3e8fcb"/><rect x="4.900" y="7.400" width="5" height="4.400" rx="1.400" fill="#3e8fcb"/><rect x="7.600" y="10.200" width="4.600" height="4.800" rx="1.400" fill="#f7cb3b"/><rect x="9.600" y="7.800" width="4.900" height="4.600" rx="1.400" fill="#f7cb3b"/><rect x="7.200" y="7.400" width="2.400" height="2.600" fill="#3e8fcb"/></svg>
<div id="t38" class="t" style="left:46.2px;top:149.6px;color:#6592b5;font-size:12.41px;font-weight:400;letter-spacing:-0.420px;line-height:16px;height:16px;">basic14_str_arithmetic.py</div>
<svg style="left:28.6px;top:170.0px;" width="16" height="16" viewBox="0 0 16 16"><path d="M5 0H11.200V13.600H1V4.600H5Z" fill="#9aa7b0" opacity=".72"/><path d="M0.900 3.700L4.100 0.300V3.700Z" fill="#9aa7b0" opacity=".72"/><rect x="7.200" y="5" width="4.600" height="5" rx="1.400" fill="#3e8fcb"/><rect x="4.900" y="7.400" width="5" height="4.400" rx="1.400" fill="#3e8fcb"/><rect x="7.600" y="10.200" width="4.600" height="4.800" rx="1.400" fill="#f7cb3b"/><rect x="9.600" y="7.800" width="4.900" height="4.600" rx="1.400" fill="#f7cb3b"/><rect x="7.200" y="7.400" width="2.400" height="2.600" fill="#3e8fcb"/></svg>
<div id="t39" class="t" style="left:46.2px;top:169.6px;color:#6592b5;font-size:12.36px;font-weight:400;letter-spacing:-0.420px;line-height:16px;height:16px;">basic15_f_string.py</div>
<svg style="left:28.6px;top:190.0px;" width="16" height="16" viewBox="0 0 16 16"><path d="M5 0H11.200V13.600H1V4.600H5Z" fill="#9aa7b0" opacity=".72"/><path d="M0.900 3.700L4.100 0.300V3.700Z" fill="#9aa7b0" opacity=".72"/><rect x="7.200" y="5" width="4.600" height="5" rx="1.400" fill="#3e8fcb"/><rect x="4.900" y="7.400" width="5" height="4.400" rx="1.400" fill="#3e8fcb"/><rect x="7.600" y="10.200" width="4.600" height="4.800" rx="1.400" fill="#f7cb3b"/><rect x="9.600" y="7.800" width="4.900" height="4.600" rx="1.400" fill="#f7cb3b"/><rect x="7.200" y="7.400" width="2.400" height="2.600" fill="#3e8fcb"/></svg>
<div id="t40" class="t" style="left:46.2px;top:189.6px;color:#6592b5;font-size:12.47px;font-weight:400;letter-spacing:-0.420px;line-height:16px;height:16px;">basic16_format_string.py</div>
<svg style="left:28.6px;top:210.0px;" width="16" height="16" viewBox="0 0 16 16"><path d="M5 0H11.200V13.600H1V4.600H5Z" fill="#9aa7b0" opacity=".72"/><path d="M0.900 3.700L4.100 0.300V3.700Z" fill="#9aa7b0" opacity=".72"/><rect x="7.200" y="5" width="4.600" height="5" rx="1.400" fill="#3e8fcb"/><rect x="4.900" y="7.400" width="5" height="4.400" rx="1.400" fill="#3e8fcb"/><rect x="7.600" y="10.200" width="4.600" height="4.800" rx="1.400" fill="#f7cb3b"/><rect x="9.600" y="7.800" width="4.900" height="4.600" rx="1.400" fill="#f7cb3b"/><rect x="7.200" y="7.400" width="2.400" height="2.600" fill="#3e8fcb"/></svg>
<div id="t41" class="t" style="left:46.2px;top:209.6px;color:#6592b5;font-size:12.75px;font-weight:400;letter-spacing:-0.420px;line-height:16px;height:16px;">basic17_string_definition.py</div>
<svg style="left:28.6px;top:230.0px;" width="16" height="16" viewBox="0 0 16 16"><path d="M5 0H11.200V13.600H1V4.600H5Z" fill="#9aa7b0" opacity=".72"/><path d="M0.900 3.700L4.100 0.300V3.700Z" fill="#9aa7b0" opacity=".72"/><rect x="7.200" y="5" width="4.600" height="5" rx="1.400" fill="#3e8fcb"/><rect x="4.900" y="7.400" width="5" height="4.400" rx="1.400" fill="#3e8fcb"/><rect x="7.600" y="10.200" width="4.600" height="4.800" rx="1.400" fill="#f7cb3b"/><rect x="9.600" y="7.800" width="4.900" height="4.600" rx="1.400" fill="#f7cb3b"/><rect x="7.200" y="7.400" width="2.400" height="2.600" fill="#3e8fcb"/></svg>
<div id="t42" class="t" style="left:46.2px;top:229.6px;color:#6592b5;font-size:12.43px;font-weight:400;letter-spacing:-0.420px;line-height:16px;height:16px;">basic18_bool.py</div>
<svg style="left:28.6px;top:250.0px;" width="16" height="16" viewBox="0 0 16 16"><path d="M5 0H11.200V13.600H1V4.600H5Z" fill="#9aa7b0" opacity=".72"/><path d="M0.900 3.700L4.100 0.300V3.700Z" fill="#9aa7b0" opacity=".72"/><rect x="7.200" y="5" width="4.600" height="5" rx="1.400" fill="#3e8fcb"/><rect x="4.900" y="7.400" width="5" height="4.400" rx="1.400" fill="#3e8fcb"/><rect x="7.600" y="10.200" width="4.600" height="4.800" rx="1.400" fill="#f7cb3b"/><rect x="9.600" y="7.800" width="4.900" height="4.600" rx="1.400" fill="#f7cb3b"/><rect x="7.200" y="7.400" width="2.400" height="2.600" fill="#3e8fcb"/></svg>
<div id="t43" class="t" style="left:46.2px;top:249.6px;color:#6592b5;font-size:12.25px;font-weight:400;letter-spacing:-0.420px;line-height:16px;height:16px;">basic19_type.py</div>
<svg style="left:28.0px;top:270.0px;" width="16" height="16" viewBox="0 0 16 16"><path d="M6 0H12V9H3V3.400Z" fill="#9aa7b0" opacity=".72"/><path d="M5.500 0v3H2.600" fill="none" stroke="#3c3f41" stroke-width=".9"/><rect x="0" y="9.500" width="15.500" height="6" fill="#3b8fc4"/></svg>
<div id="t44" class="t" style="left:29.5px;top:279.3px;color:#1d4d6e;font-size:6.5px;font-weight:700;letter-spacing:0.445px;line-height:7px;height:7px;">MD</div>
<div id="t45" class="t" style="left:46.2px;top:269.6px;color:#6592b5;font-size:12.29px;font-weight:400;letter-spacing:-0.420px;line-height:16px;height:16px;">readme.md</div>
<svg style="left:9.0px;top:290.0px;" width="16" height="15" viewBox="0 0 16 15"><path d="M1 2h4.800l1.400 1.800H15V13H1Z" fill="#9aa7b0" opacity="0.8"/><circle cx="6" cy="8.400" r="2" fill="#3c3f41"/></svg>
<div id="t46" class="t" style="left:28.0px;top:289.6px;color:#bbbbbb;font-size:12.12px;font-weight:400;letter-spacing:-0.420px;line-height:16px;height:16px;">part2_sequences</div>
<svg style="left:9.0px;top:310.0px;" width="16" height="15" viewBox="0 0 16 15"><path d="M1 2h4.800l1.400 1.800H15V13H1Z" fill="#9aa7b0" opacity="0.8"/><circle cx="6" cy="8.400" r="2" fill="#3c3f41"/></svg>
<div id="t47" class="t" style="left:28.0px;top:309.6px;color:#bbbbbb;font-size:12.56px;font-weight:400;letter-spacing:-0.420px;line-height:16px;height:16px;">part3_structures</div>
<svg style="left:9.0px;top:330.0px;" width="16" height="15" viewBox="0 0 16 15"><path d="M1 2h4.800l1.400 1.800H15V13H1Z" fill="#9aa7b0" opacity="0.8"/><circle cx="6" cy="8.400" r="2" fill="#3c3f41"/></svg>
<div id="t48" class="t" style="left:28.0px;top:329.6px;color:#bbbbbb;font-size:12.8px;font-weight:400;letter-spacing:-0.391px;line-height:16px;height:16px;">part4_dictionary</div>
<svg style="left:9.0px;top:350.0px;" width="16" height="15" viewBox="0 0 16 15"><path d="M1 2h4.800l1.400 1.800H15V13H1Z" fill="#9aa7b0" opacity="0.8"/><circle cx="6" cy="8.400" r="2" fill="#3c3f41"/></svg>
<div id="t49" class="t" style="left:28.0px;top:349.6px;color:#bbbbbb;font-size:12.56px;font-weight:400;letter-spacing:-0.420px;line-height:16px;height:16px;">part5_comprehension</div>
<svg style="left:9.0px;top:370.0px;" width="16" height="15" viewBox="0 0 16 15"><path d="M1 2h4.800l1.400 1.800H15V13H1Z" fill="#9aa7b0" opacity="0.6"/></svg>
<div id="t50" class="t" style="left:28.0px;top:369.6px;color:#75802c;font-size:12.44px;font-weight:400;letter-spacing:-0.420px;line-height:16px;height:16px;">venv</div>
<div id="t51" class="t" style="left:57.3px;top:369.6px;color:#77786e;font-size:12.8px;font-weight:400;letter-spacing:-0.146px;line-height:16px;height:16px;">library root</div>
<div class="abs" style="left:204.0px;top:28.0px;width:8.0px;height:288.0px;background:rgba(140,143,145,.32);"></div>
<div class="abs" style="left:16.0px;top:381.0px;width:103.0px;height:8.0px;background:rgba(140,143,145,.38);"></div>
</div>
<div class="abs" id="editor" style="left:235px;top:85px;width:1112px;height:340px;background:#2b2b2b;overflow:hidden">
<div class="abs" style="left:0.0px;top:0.0px;width:63.0px;height:340.0px;background:#313335;"></div>
<div class="abs" style="left:62.0px;top:0.0px;width:1.0px;height:340.0px;background:#3f4244;"></div>
<div class="abs" style="left:53.2px;top:0.0px;width:9.8px;height:209.0px;background:#374955;"></div>
<div class="abs" style="left:53.2px;top:257.0px;width:9.8px;height:24.0px;background:#374955;"></div>
<div class="abs" style="left:1031.0px;top:0.0px;width:1.0px;height:340.0px;background:#4b4b4b;"></div>
<div class="abs" style="left:63.0px;top:185.0px;width:1049.0px;height:24.0px;background:#305da4;"></div>
<div class="abs" style="left:1031.0px;top:185.0px;width:1.0px;height:24.0px;background:#4a6596;"></div>
<div class="abs" style="left:69.5px;top:42.0px;width:40.5px;height:23.0px;background:#344134;"></div>
<div class="abs" style="left:69.5px;top:306.0px;width:40.5px;height:23.0px;background:#344134;"></div>
<div class="ln" style="left:0;top:-7px;width:21.500px;color:#606366">9</div>
<div class="cl" style="top:-7px">city_name = <span class="s">"<span class="j">横浜市</span>"</span><span class="iv" style="margin-left:20.500px">city_name: </span><span class="ivv">'<span class="j">横浜市</span>'</span></div>
<div class="ln" style="left:0;top:17px;width:21.500px;color:#606366">10</div>
<div class="cl" style="top:17px">full_address = <span class="s">f'<span class="j">神奈川県</span></span><span class="k">{</span>city_name<span class="k">}</span><span class="s"><span class="j">中区元浜町３丁目２１</span>-<span class="j">２</span>'</span><span class="iv" style="margin-left:20.500px">full_address: </span><span class="ivv">'<span class="j">神奈川県横浜市中区元浜町３丁目２１</span>-<span class="j">２</span>'</span></div>
<div class="ln" style="left:0;top:41px;width:21.500px;color:#606366">11</div>
<div class="cl" style="top:41px"><span class="b">print</span>(full_address)</div>
<div class="ln" style="left:0;top:65px;width:21.500px;color:#606366">12</div>
<div class="ln" style="left:0;top:89px;width:21.500px;color:#606366">13</div>
<div class="cl" style="top:89px"><span class="c"># <span class="j">複数差し込むことも可能です</span></span></div>
<div class="ln" style="left:0;top:113px;width:21.500px;color:#606366">14</div>
<div class="cl" style="top:113px">pref_name = <span class="s">"<span class="j">神奈川県</span>"</span><span class="iv" style="margin-left:20.500px">pref_name: </span><span class="ivv">'<span class="j">神奈川県</span>'</span></div>
<div class="ln" style="left:0;top:137px;width:21.500px;color:#606366">15</div>
<div class="cl" style="top:137px">weather = <span class="s">"<span class="j">晴れ</span>"</span><span class="iv" style="margin-left:20.500px">weather: </span><span class="ivv">'<span class="j">晴れ</span>'</span></div>
<div class="ln" style="left:0;top:161px;width:21.500px;color:#606366">16</div>
<div class="cl" style="top:161px">forecast = <span class="s">f'<span class="j">今日の</span></span><span class="k">{</span>pref_name<span class="k">}</span><span class="s"><span class="j">の天気は</span></span><span class="k">{</span>weather<span class="k">}</span><span class="s"><span class="j">でしょう</span>'</span><span class="iv" style="margin-left:20.500px">forecast: </span><span class="ivv">'<span class="j">今日の神奈川県の天気は晴れでしょう</span>'</span></div>
<div class="ln" style="left:0;top:185px;width:21.500px;color:#c8c8c8">17</div>
<div class="cl" style="top:185px"><span class="b">print</span><span style="color:#c3cfde">(forecast)</span></div>
<div class="ln" style="left:0;top:209px;width:21.500px;color:#606366">18</div>
<div class="ln" style="left:0;top:233px;width:21.500px;color:#606366">19</div>
<div class="cl" style="top:233px"><span class="c"># f<span class="j">文字列では、</span>{}<span class="j">内の値の型は気にしなくてよい</span>(<span class="j">強制的に文字列として扱われる</span>)</span></div>
<div class="ln" style="left:0;top:257px;width:21.500px;color:#606366">20</div>
<div class="cl" style="top:257px">this_year = <span class="n">2022</span></div>
<div class="ln" style="left:0;top:281px;width:21.500px;color:#606366">21</div>
<div class="cl" style="top:281px">this_year_full_string = <span class="s">f'<span class="j">今年は</span></span><span class="k">{</span>this_year<span class="k">}</span><span class="s"><span class="j">年</span>'</span></div>
<div class="ln" style="left:0;top:305px;width:21.500px;color:#606366">22</div>
<div class="cl" style="top:305px"><span class="b">print</span>(this_year_full_string)</div>
<div class="ln" style="left:0;top:329px;width:21.500px;color:#606366">23</div>
<div class="abs" style="left:69.5px;top:187.0px;width:2.0px;height:20.0px;background:#d8d8d8;"></div>
<svg style="left:413.0px;top:205.0px;" width="8" height="17" viewBox="0 0 8 17"><path d="M0.500 0.800c2 0 3.500.400 3.500 1.700c0-1.300 1.500-1.700 3.500-1.700M0.500 16.200c2 0 3.500-.400 3.500-1.700c0 1.300 1.500 1.700 3.500 1.700M4 2.500v12" stroke="#111" stroke-width="1.300" fill="none"/></svg>
<svg style="left:1091.5px;top:7.0px;" width="12" height="10" viewBox="0 0 12 10"><path d="M1 5l3.500 3.500L11 1" stroke="#49a84a" stroke-width="2.200" fill="none"/></svg>
<div class="abs" style="left:1094.0px;top:35.0px;width:2.0px;height:18.0px;background:#4f6d9c;"></div>
<div class="abs" style="left:1094.0px;top:99.0px;width:2.0px;height:74.0px;background:#4f6d9c;"></div>
<div class="abs" style="left:1098.0px;top:118.0px;width:13.5px;height:2.0px;background:#1c8a34;"></div>
<div class="abs" style="left:1098.0px;top:173.0px;width:13.5px;height:2.0px;background:#1c8a34;"></div>
<div class="abs" style="left:1098.0px;top:219.0px;width:13.5px;height:2.0px;background:#1c8a34;"></div>
<div class="abs" style="left:1098.0px;top:256.0px;width:13.5px;height:2.0px;background:#1c8a34;"></div>
<div class="abs" style="left:1098.0px;top:275.5px;width:13.5px;height:2.0px;background:#1c8a34;"></div>
<div class="abs" style="left:1094.0px;top:274.0px;width:2.0px;height:9.0px;background:#1c9a34;"></div>
<div class="abs" style="left:1103.5px;top:103.0px;width:8.5px;height:131.0px;background:rgba(160,162,164,.33);"></div>
</div>
<div class="abs" style="left:235.0px;top:425.0px;width:1112.0px;height:23.5px;background:#323436;"></div>
<div class="abs" style="left:1347.0px;top:58.0px;width:21.0px;height:620.0px;background:#3c3f41;"></div>
<div class="abs" style="left:1347.0px;top:58.0px;width:1.0px;height:620.0px;background:#35383a;"></div>
<svg style="left:1351.5px;top:69.5px;" width="12" height="13" viewBox="0 0 12 13"><ellipse cx="6" cy="2.500" rx="5.500" ry="2.300" fill="#c4c6c7"/><path d="M0.500 4.200c0 3 11 3 11 0v2.300c0 3-11 3-11 0zM0.500 8c0 3 11 3 11 0v2.300c0 3-11 3-11 0z" fill="#c4c6c7"/></svg>
<div id="t52" class="t" style="left:1365.0px;top:85.8px;transform:rotate(90deg);transform-origin:0 0;color:#bbbbbb;font-size:11.44px;font-weight:400;letter-spacing:-0.420px">Database</div>
<svg style="left:1351.5px;top:154.5px;" width="12" height="11" viewBox="0 0 12 11"><path d="M0 1h2.500M4.500 1h3M9.500 1H12M0 5.500h2.500M4.500 5.500h3M9.500 5.500H12M0 10h2.500M4.500 10h3M9.500 10H12" stroke="#d0d2d3" stroke-width="2.400"/></svg>
<div id="t53" class="t" style="left:1365.0px;top:169.8px;transform:rotate(90deg);transform-origin:0 0;color:#bbbbbb;font-size:11.35px;font-weight:400;letter-spacing:-0.420px">SciView</div>
<svg style="left:1351.0px;top:230.0px;" width="13" height="14" viewBox="0 0 13 14"><path d="M6 1.500c-3 0-4.200 2-4.200 4.500c0 3-1 4-1.800 4.800h12c-.800-.800-1.800-1.800-1.800-4.800c0-2.500-1.200-4.500-4.200-4.500zM4.500 12h3c0 1-.700 1.700-1.500 1.700s-1.500-.700-1.500-1.700z" fill="#c4c6c7"/><circle cx="10.500" cy="3" r="2.600" fill="#e05555"/></svg>
<div id="t54" class="t" style="left:1365.0px;top:246.3px;transform:rotate(90deg);transform-origin:0 0;color:#bbbbbb;font-size:12.2px;font-weight:400;letter-spacing:-0.420px">Notifications</div>
<div class="abs" style="left:22.0px;top:448.5px;width:1325.0px;height:28.0px;background:#3c3f41;"></div>
<div id="t55" class="t" style="left:28.3px;top:454.8px;color:#bbbbbb;font-size:12.41px;font-weight:400;letter-spacing:-0.420px;line-height:16px;height:16px;">Debug:</div>
<svg style="left:86.0px;top:455.0px;" width="15.5" height="15.5" viewBox="0 0 14 14"><rect x="3.500" y="0.500" width="6.500" height="7" rx="2" fill="#3e7fb3"/><rect x="0.500" y="3.800" width="7" height="6.200" rx="2" fill="#3e7fb3"/><rect x="4" y="7" width="6.500" height="6.500" rx="2" fill="#d9b43a"/><rect x="7" y="4" width="6.500" height="6.500" rx="2" fill="#d9b43a"/><rect x="3.500" y="3.800" width="3.500" height="3.200" fill="#3e7fb3"/><circle cx="11.500" cy="11.500" r="2.600" fill="#3c3f41"/><circle cx="11.500" cy="11.500" r="1.900" fill="#3fe03f"/></svg>
<div id="t56" class="t" style="left:105.6px;top:454.8px;color:#bbbbbb;font-size:12.24px;font-weight:400;letter-spacing:-0.420px;line-height:16px;height:16px;">basic15_f_string</div>
<svg style="left:196.3px;top:459.5px;" width="7" height="7" viewBox="0 0 7 7"><path d="M0.500 0.500L6.5 6.5M6.5 0.500L0.500 6.5" stroke="#6e7275" stroke-width="1.100" fill="none"/></svg>
<div class="abs" style="left:73.5px;top:473.0px;width:140.5px;height:3.0px;background:#747a80;border-radius:1.5px"></div>
<svg style="left:1300.9px;top:455.0px;" width="14" height="14" viewBox="0 0 14 14"><path fill="#c9cbcc" fill-rule="evenodd" stroke="#c9cbcc" stroke-width=".3" stroke-linejoin="round" d="M5.49 2.98L5.37 0.61L8.63 0.61L8.51 2.98L9.73 3.68L11.72 2.39L13.35 5.22L11.24 6.30L11.24 7.70L13.35 8.78L11.72 11.61L9.73 10.32L8.51 11.02L8.63 13.39L5.37 13.39L5.49 11.02L4.27 10.32L2.28 11.61L0.65 8.78L2.76 7.70L2.76 6.30L0.65 5.22L2.28 2.39L4.27 3.68ZM7 4.80a2.20 2.20 0 1 0 0 4.40a2.20 2.20 0 1 0 0 -4.40Z"/></svg>
<div class="abs" style="left:1328.0px;top:461.0px;width:12.0px;height:2.0px;background:#c9cbcc;"></div>
<div class="abs" style="left:22.0px;top:475.5px;width:1325.0px;height:1.0px;background:#323536;"></div>
<div class="abs" style="left:50.5px;top:477.0px;width:1.0px;height:200.0px;background:#323536;"></div>
<svg style="left:29.5px;top:483.5px;" width="15" height="15" viewBox="0 0 15 15"><path d="M11.500 3.200A5.200 5.200 0 1 0 12.700 8.500" stroke="#4fa058" stroke-width="2" fill="none"/><path d="M8.500 0l5.300 2.200l-3.500 4z" fill="#4fa058"/><rect x="10" y="10" width="4.500" height="4.500" fill="#afb1b3"/></svg>
<div id="t57" class="t" style="left:64.4px;top:481.8px;color:#bbbbbb;font-size:11.53px;font-weight:400;letter-spacing:-0.420px;line-height:16px;height:16px;">Debugger</div>
<div id="t58" class="t" style="left:137.2px;top:481.8px;color:#bbbbbb;font-size:11.27px;font-weight:400;letter-spacing:-0.420px;line-height:16px;height:16px;">Console</div>
<div class="abs" style="left:124.0px;top:500.5px;width:65.5px;height:3.0px;background:#747a80;"></div>
<svg style="left:195.0px;top:483.5px;" width="12.5" height="12" viewBox="0 0 12.5 12"><path d="M0 1.200h12.500M0 10.400h12.500" stroke="#c4c6c7" stroke-width="2"/><path d="M0 5.800h12.500" stroke="#3a95d2" stroke-width="2.200"/></svg>
<div class="abs" style="left:217.5px;top:480.0px;width:1.0px;height:20.0px;background:#515456;"></div>
<svg style="left:227.5px;top:482.5px;" width="13.5" height="13" viewBox="0 0 13.5 13"><path d="M1 6.500L6.500 1.500L11 6.500" stroke="#3a95d2" stroke-width="1.900" fill="none"/><path d="M13 3.500v6h-6z" fill="#3a95d2"/><path d="M0.500 11.500h12.500" stroke="#c4c6c7" stroke-width="1.700"/></svg>
<svg style="left:254.0px;top:482.0px;" width="12.5" height="13.5" viewBox="0 0 12.5 13.5"><path d="M6.250 0v7" stroke="#3a95d2" stroke-width="2.200"/><path d="M1.500 4.800l4.750 4.700l4.750-4.700z" fill="#3a95d2"/><path d="M0 12h12.500" stroke="#c4c6c7" stroke-width="1.700"/></svg>
<svg style="left:278.0px;top:482.0px;" width="14.5" height="13.5" viewBox="0 0 14.5 13.5"><path d="M8.250 0v7" stroke="#3a95d2" stroke-width="2.200"/><path d="M3.500 4.800l4.750 4.700l4.750-4.700z" fill="#3a95d2"/><path d="M2 12h12.500" stroke="#c4c6c7" stroke-width="1.700"/><path d="M0 1.200h4.500M0 3.500h3.500M0 5.800h2.500" stroke="#c4c6c7" stroke-width="1"/></svg>
<svg style="left:306.0px;top:482.0px;" width="12.5" height="13.5" viewBox="0 0 12.5 13.5"><path d="M6.250 9.500v-6" stroke="#3a95d2" stroke-width="2.200"/><path d="M1.500 5.500l4.750-4.900l4.750 4.900z" fill="#3a95d2"/><path d="M0 12h12.500" stroke="#c4c6c7" stroke-width="1.700"/></svg>
<svg style="left:332.0px;top:482.5px;" width="14.5" height="14" viewBox="0 0 14.5 14"><path d="M1 1l6 6" stroke="#3a95d2" stroke-width="2.200"/><path d="M9.500 2.500v7h-7z" fill="#3a95d2"/><path d="M8.800 6h4.400M8.800 13.200h4.400M11 6v7.200" stroke="#c4c6c7" stroke-width="1.300" fill="none"/></svg>
<div class="abs" style="left:355.5px;top:480.0px;width:1.0px;height:20.0px;background:#515456;"></div>
<svg style="left:365.3px;top:483.5px;" width="12.5" height="11.5" viewBox="0 0 12.5 11.5"><rect x="0" y="0" width="12.500" height="11.500" fill="#c4c6c7"/><path d="M1.500 4.400h2.600v2h-2.600zM5 4.400h2.600v2h-2.600zM8.500 4.400h2.600v2h-2.600zM1.500 7.800h2.600v2h-2.600zM5 7.800h2.600v2h-2.600zM8.500 7.800h2.600v2h-2.600z" fill="#3c3f41"/><rect x="1.500" y="1.400" width="9.600" height="1.600" fill="#3c3f41" opacity=".35"/></svg>
<svg style="left:1329.0px;top:484.0px;" width="14" height="13" viewBox="0 0 14 13"><rect x="0" y="0" width="7" height="4.500" fill="#c4c6c7"/><rect x="8" y="0" width="4.500" height="4.500" fill="#c4c6c7"/><rect x="0" y="5.500" width="12.500" height="4.500" fill="#c4c6c7"/><path d="M11 12h5.500l-2.750 2.800z" fill="#c4c6c7"/></svg>
<svg style="left:29.5px;top:509.5px;" width="14.5" height="14" viewBox="0 0 14.5 14"><path d="M13.800 3.300l-2.600 2.600l-2.300-.600l-.600-2.300L10.900.400C9 -.300 6.500.800 6.300 3.500c0 .700 0 1 .200 1.600L.600 11c-.800.800-.800 1.900-.100 2.500s1.700.700 2.500-.100l5.900-5.900c2.900.900 5.600-1.300 4.900-4.200z" fill="#c4c6c7"/></svg>
<div class="abs" style="left:27.0px;top:532.0px;width:19.5px;height:1.0px;background:#505355;"></div>
<svg style="left:30.5px;top:542.5px;" width="13.5" height="13" viewBox="0 0 13.5 13"><rect x="0" y="0.500" width="3" height="12" fill="#4fa058"/><path d="M5 0.200l8.500 6.300l-8.500 6.300z" fill="#4fa058"/></svg>
<div class="abs" style="left:32.0px;top:569.0px;width:3.0px;height:10.5px;background:#5f6264;"></div>
<div class="abs" style="left:37.2px;top:569.0px;width:3.0px;height:10.5px;background:#5f6264;"></div>
<div class="abs" style="left:30.6px;top:595.5px;width:10.8px;height:10.8px;background:#d1524f;"></div>
<div class="abs" style="left:27.0px;top:617.5px;width:19.5px;height:1.0px;background:#505355;"></div>
<svg style="left:29.5px;top:626.0px;" width="14.5" height="14.5" viewBox="0 0 14.5 14.5"><circle cx="9.500" cy="4.800" r="4.600" fill="#d1524f" stroke="#3c3f41" stroke-width=".8"/><circle cx="5" cy="9.500" r="4.800" fill="#d1524f" stroke="#3c3f41" stroke-width=".8"/></svg>
<svg style="left:32.5px;top:664.5px;" width="8" height="6" viewBox="0 0 8 6"><path d="M0.500 0.500l2.500 2.500l-2.500 2.500M4.500 0.500l2.500 2.500l-2.500 2.500" stroke="#c4c6c7" stroke-width="1.100" fill="none"/></svg>
<div class="abs" style="left:52.0px;top:504.0px;width:27.0px;height:173.0px;background:#3c3f41;"></div>
<svg style="left:59.5px;top:511.0px;" width="10" height="14" viewBox="0 0 10 14"><path d="M5 14V2M0.800 6l4.200-4.500l4.200 4.500" stroke="#5c5f61" stroke-width="1.500" fill="none"/></svg>
<svg style="left:59.5px;top:538.0px;" width="10" height="14" viewBox="0 0 10 14"><path d="M5 0v12M0.800 8l4.200 4.500l4.200-4.500" stroke="#5c5f61" stroke-width="1.500" fill="none"/></svg>
<svg style="left:58.0px;top:564.5px;" width="14" height="14.5" viewBox="0 0 14 14.5"><path d="M0 1h13.500M0 6.200h10.500a2.700 2.700 0 0 1 0 5.400h-2.800" stroke="#c4c6c7" stroke-width="1.700" fill="none"/><path d="M8.500 8.800l-3.200 2.800l3.200 2.800z" fill="#c4c6c7"/><path d="M0 11.600h3.500" stroke="#c4c6c7" stroke-width="1.700"/></svg>
<div class="abs" style="left:54.0px;top:586.0px;width:22.0px;height:22.0px;background:#5a5d5f;border-radius:3px"></div>
<svg style="left:58.5px;top:590.0px;" width="13" height="12.5" viewBox="0 0 13 12.5"><path d="M0 2h5M0 6h4M0 11.500h13" stroke="#d4d6d7" stroke-width="1.700"/><path d="M9 0v6" stroke="#d4d6d7" stroke-width="1.800"/><path d="M5.500 4.500l3.500 4l3.500-4z" fill="#d4d6d7"/></svg>
<svg style="left:58.0px;top:617.0px;" width="14" height="13" viewBox="0 0 14 13"><rect x="3" y="0" width="8" height="2.500" fill="#c4c6c7"/><rect x="0" y="3.500" width="14" height="5.500" rx="1" fill="#c4c6c7"/><rect x="3.300" y="7.800" width="7.400" height="4.400" fill="#3c3f41" stroke="#c4c6c7" stroke-width="1.400"/></svg>
<svg style="left:59.5px;top:641.5px;" width="11" height="14" viewBox="0 0 11 14"><path d="M0 2h11v1.800H0zM3.500 0h4v2h-4zM1 4.800h9v7.700c0 .800-.600 1.500-1.500 1.500h-6c-.800 0-1.500-.600-1.500-1.500z" fill="#c4c6c7"/></svg>
<svg style="left:61.5px;top:664.5px;" width="8" height="6" viewBox="0 0 8 6"><path d="M0.500 0.500l2.500 2.500l-2.500 2.500M4.500 0.500l2.500 2.500l-2.500 2.500" stroke="#c4c6c7" stroke-width="1.100" fill="none"/></svg>
<div class="abs" id="console" style="left:80px;top:503.5px;width:1267px;height:173.5px;background:#2b2b2b;overflow:hidden">
<div class="abs" style="left:0.0px;top:49.0px;width:260.5px;height:23.5px;background:#214283;"></div>
<div class="con" style="left:0.500px;top:0.500px">D:\projects\python_basic_sec1\venv\Scripts\python.exe "C:\Program Files\JetBrains\PyCharm 2022.1.1\plugins\python\helpers\pydev\pydevd.py" --multiprocess --qt-support=auto --client 127.0.0.1 --port 51512 --file D:/projects/python_basic_sec1/part1_literals/basic15_f_string.py</div>
<div class="con" style="left:0.500px;top:24.500px">Connected to pydev debugger (build 221.5591.52)</div>
<div class="con" style="left:0.500px;top:48.500px;color:#c8d0dc"><span class="j">神奈川県横浜市中区元浜町３丁目２１</span>-<span class="j">２</span></div>
<div class="con" style="left:0.500px;top:97.500px;color:#1f8a1f">&gt;&gt;&gt;</div>
<div class="abs" style="left:0.0px;top:164.0px;width:1267.0px;height:9.5px;background:#3c3f41;"></div>
<div class="abs" style="left:0.0px;top:164.0px;width:698.5px;height:9.5px;background:#535353;"></div>
</div>
<div class="abs" style="left:0.0px;top:677.0px;width:1368.0px;height:1.0px;background:#323536;"></div>
<div class="abs" style="left:0.0px;top:678.0px;width:1368.0px;height:22.0px;background:#3c3f41;"></div>
<div class="abs" style="left:125.5px;top:678.0px;width:68.0px;height:22.0px;background:#2d2f30;"></div>
<svg style="left:31.0px;top:684.0px;" width="9" height="12" viewBox="0 0 9 12"><circle cx="2" cy="2" r="1.800" fill="#afb1b3"/><circle cx="2" cy="10" r="1.800" fill="#afb1b3"/><circle cx="7.500" cy="3.500" r="1.800" fill="#afb1b3"/><path d="M2 2v8M7.500 3.500c0 3.500-5.500 2.500-5.500 5" stroke="#afb1b3" stroke-width="1.300" fill="none"/></svg>
<div id="t59" class="t" style="left:47.0px;top:681.8px;color:#bbbbbb;font-size:12.72px;font-weight:400;letter-spacing:-0.420px;line-height:16px;height:16px;">Git</div>
<svg style="left:81.5px;top:684.5px;" width="9" height="11" viewBox="0 0 9 11"><path d="M0 0l9 5.500l-9 5.500z" fill="#afb1b3"/></svg>
<div id="t60" class="t" style="left:97.0px;top:681.8px;color:#bbbbbb;font-size:11.04px;font-weight:400;letter-spacing:-0.420px;line-height:16px;height:16px;">Run</div>
<svg style="left:136.0px;top:683.5px;" width="13" height="13" viewBox="0 0 13 13"><ellipse cx="6" cy="7" rx="3.600" ry="4.500" fill="#c9cbcc"/><ellipse cx="6" cy="2.800" rx="2.200" ry="1.800" fill="#c9cbcc"/><path d="M0.500 4l2.500 1.800M11.500 4l-2.500 1.800M0 7.500h3M12 7.500h-3M0.500 11l2.500-1.600M11.500 11l-2.500-1.600" stroke="#c9cbcc" stroke-width="1.200" fill="none"/><circle cx="10.800" cy="11" r="2.300" fill="#2d2f30"/><circle cx="10.800" cy="11" r="1.700" fill="#3fe03f"/></svg>
<div id="t61" class="t" style="left:152.5px;top:681.8px;color:#e8e8e8;font-size:11.57px;font-weight:400;letter-spacing:-0.420px;line-height:16px;height:16px;">Debug</div>
<svg style="left:206.0px;top:683.5px;" width="12" height="12" viewBox="0 0 12 12"><path d="M6 0l6 3l-6 3l-6-3z" fill="#afb1b3"/><path d="M0.500 6l5.500 2.700l5.500-2.700M0.500 8.800l5.500 2.700l5.500-2.700" stroke="#afb1b3" stroke-width="1.300" fill="none"/></svg>
<div id="t62" class="t" style="left:222.5px;top:681.8px;color:#bbbbbb;font-size:11.15px;font-weight:400;letter-spacing:-0.420px;line-height:16px;height:16px;">Python Packages</div>
<svg style="left:327.5px;top:685.0px;" width="10" height="9.5" viewBox="0 0 10 9.5"><path d="M0 1h1.800M3.200 1H10M0 4.700h1.800M3.200 4.700H10M0 8.400h1.800M3.200 8.400H10" stroke="#afb1b3" stroke-width="1.700"/></svg>
<div id="t63" class="t" style="left:342.5px;top:681.8px;color:#bbbbbb;font-size:11.03px;font-weight:400;letter-spacing:-0.420px;line-height:16px;height:16px;">TODO</div>
<svg style="left:395.0px;top:684.0px;" width="11" height="11" viewBox="0 0 11 11"><g stroke="#3c3f41" stroke-width=".7"><path d="M2.600 5.400V2c0-1.300.800-2 2.800-2s2.800.700 2.800 2v2.200c0 .800-.500 1.300-1.300 1.300H4.200c-.900 0-1.600.600-1.600 1.500v1.200H1.500C.500 8.200 0 7.200 0 5.500s.600-2.700 1.600-2.700h3.800" fill="#afb1b3"/><path d="M8.400 5.600V9c0 1.300-.800 2-2.800 2s-2.800-.700-2.800-2V6.800c0-.800.500-1.300 1.300-1.300h2.700c.900 0 1.600-.600 1.600-1.500V2.800h1.100c1 0 1.500 1 1.500 2.700s-.600 2.700-1.600 2.700H5.600" fill="#afb1b3"/></g></svg>
<div id="t64" class="t" style="left:411.0px;top:681.8px;color:#bbbbbb;font-size:11.32px;font-weight:400;letter-spacing:-0.420px;line-height:16px;height:16px;">Python Console</div>
<svg style="left:510.0px;top:684.0px;" width="11.5" height="11.5" viewBox="0 0 11.5 11.5"><circle cx="5.750" cy="5.750" r="5.750" fill="#afb1b3"/><path d="M5.750 2.500v4" stroke="#3c3f41" stroke-width="1.700"/><circle cx="5.750" cy="8.600" r="1" fill="#3c3f41"/></svg>
<div id="t65" class="t" style="left:526.0px;top:681.8px;color:#bbbbbb;font-size:11.33px;font-weight:400;letter-spacing:-0.420px;line-height:16px;height:16px;">Problems</div>
<svg style="left:593.0px;top:684.5px;" width="11.5" height="10.5" viewBox="0 0 11.5 10.5"><rect x="0" y="0" width="11.500" height="10.500" rx="1" fill="#afb1b3"/><path d="M2 3l2.500 2.200l-2.500 2.200M5.800 8h3.500" stroke="#3c3f41" stroke-width="1.200" fill="none"/></svg>
<div id="t66" class="t" style="left:609.0px;top:681.8px;color:#bbbbbb;font-size:12.01px;font-weight:400;letter-spacing:-0.420px;line-height:16px;height:16px;">Terminal</div>
<svg style="left:673.0px;top:684.0px;" width="12.5" height="12" viewBox="0 0 12.5 12"><path d="M3.500 0h5.500l3.500 6l-3.500 6h-5.500l-3.500-6z" fill="#afb1b3"/><path d="M4.800 3.500v5l4-2.500z" fill="#3c3f41"/></svg>
<div id="t67" class="t" style="left:690.0px;top:681.8px;color:#bbbbbb;font-size:11.18px;font-weight:400;letter-spacing:-0.420px;line-height:16px;height:16px;">Services</div>
<div class="abs" style="left:0.0px;top:700.0px;width:1368.0px;height:1.0px;background:#373a3c;"></div>
<div class="abs" style="left:0.0px;top:701.0px;width:1368.0px;height:19.0px;background:#3c3f41;"></div>
<svg style="left:6.0px;top:703.5px;" width="13" height="12" viewBox="0 0 13 12"><rect x="0.600" y="2.600" width="9.500" height="8.800" fill="none" stroke="#afb1b3" stroke-width="1.200"/><path d="M3 2.500V0.600h9.400v8.800h-2" fill="none" stroke="#afb1b3" stroke-width="1.200"/></svg>
<div id="t68" class="t" style="left:27.5px;top:701.8px;color:#bbbbbb;font-size:12.66px;font-weight:400;letter-spacing:-0.420px;line-height:16px;height:16px;">Breakpoint reached (a minute ago)</div>
<svg style="left:784.0px;top:703.5px;" width="12" height="13" viewBox="0 0 12 13"><path d="M6 0.500l5.500 3v6l-5.500 3l-5.500-3v-6z" fill="none" stroke="#a45ee0" stroke-width="1.400"/><path d="M3.500 4.500l4.500 2.200l-4.500 2.500z" fill="none" stroke="#7a5ee8" stroke-width="1.100"/></svg>
<div id="t69" class="t" style="left:800.0px;top:701.8px;color:#d4d4d4;font-size:13.5px;font-weight:400;letter-spacing:0.672px;line-height:16px;height:16px;">tabnine</div>
<div id="t70" class="t" style="left:853.0px;top:701.8px;color:#dcdcdc;font-size:12.7px;font-weight:700;letter-spacing:-0.420px;line-height:16px;height:16px;">Starter</div>
<div id="t71" class="t" style="left:905.0px;top:701.8px;color:#bbbbbb;font-size:10.88px;font-weight:400;letter-spacing:-0.420px;line-height:16px;height:16px;">17:1</div>
<div id="t72" class="t" style="left:937.5px;top:701.8px;color:#bbbbbb;font-size:10.22px;font-weight:400;letter-spacing:-0.420px;line-height:16px;height:16px;">CRLF</div>
<div id="t73" class="t" style="left:975.5px;top:701.8px;color:#bbbbbb;font-size:11.68px;font-weight:400;letter-spacing:-0.420px;line-height:16px;height:16px;">UTF-8</div>
<div id="t74" class="t" style="left:1018.0px;top:701.8px;color:#bbbbbb;font-size:11.96px;font-weight:400;letter-spacing:-0.420px;line-height:16px;height:16px;">4 spaces</div>
<div id="t75" class="t" style="left:1075.0px;top:701.8px;color:#bbbbbb;font-size:12.37px;font-weight:400;letter-spacing:-0.420px;line-height:16px;height:16px;">Python 3.10 (python_basic_sec1)</div>
<svg style="left:1259.0px;top:703.5px;" width="9" height="12" viewBox="0 0 9 12"><circle cx="2" cy="2" r="1.600" fill="#afb1b3"/><circle cx="2" cy="10" r="1.600" fill="#afb1b3"/><circle cx="7.300" cy="3.300" r="1.600" fill="#afb1b3"/><path d="M2 2v8M7.300 3.300c0 3.500-5.300 2.500-5.300 5" stroke="#afb1b3" stroke-width="1.200" fill="none"/></svg>
<div id="t76" class="t" style="left:1275.0px;top:701.8px;color:#bbbbbb;font-size:12.28px;font-weight:400;letter-spacing:-0.420px;line-height:16px;height:16px;">master</div>
<svg style="left:1320.0px;top:703.5px;" width="13" height="12" viewBox="0 0 13 12"><rect x="0" y="5" width="8.500" height="7" fill="#c9cbcc"/><path d="M6.500 5V3a2.300 2.300 0 0 1 4.600 0v1.500" stroke="#c9cbcc" stroke-width="1.400" fill="none"/></svg>
<svg style="left:1344.0px;top:703.5px;" width="15" height="13" viewBox="0 0 15 13"><circle cx="5" cy="3.500" r="3" fill="#c9cbcc"/><path d="M0 12c0-4 2-5.500 5-5.500s5 1.500 5 5.500z" fill="#c9cbcc"/><circle cx="11" cy="9.500" r="3.400" fill="#c9cbcc" stroke="#3c3f41" stroke-width="1"/><circle cx="11" cy="9.500" r="1.200" fill="#3c3f41"/></svg>
<div class="abs" style="left:0.0px;top:720.0px;width:1368.0px;height:48.0px;background:#11282e;"></div>
<svg style="left:584.5px;top:732.5px;" width="24" height="24" viewBox="0 0 24 24"><defs><linearGradient id="wl" x1="0" y1="0" x2="1" y2="1"><stop offset="0" stop-color="#6ad6ff"/><stop offset="1" stop-color="#1490df"/></linearGradient></defs><rect x="0" y="0" width="11.300" height="11.300" fill="url(#wl)"/><rect x="12.500" y="0" width="11.300" height="11.300" fill="url(#wl)"/><rect x="0" y="12.500" width="11.300" height="11.300" fill="url(#wl)"/><rect x="12.500" y="12.500" width="11.300" height="11.300" fill="url(#wl)"/></svg>
<svg style="left:630.0px;top:732.5px;" width="23" height="23" viewBox="0 0 23 23"><circle cx="13.500" cy="9" r="7.600" fill="#1d2f36" stroke="#f2f2f2" stroke-width="2.600"/><path d="M8 15l-6 6.200" stroke="#dfe6ea" stroke-width="3" stroke-linecap="round"/></svg>
<div class="abs" style="left:665.5px;top:724.0px;width:39.5px;height:40.0px;background:#1f343a;border-radius:4px;border:1px solid #2a3f45"></div>
<svg style="left:672.0px;top:731.0px;" width="27" height="27" viewBox="0 0 27 27"><defs><linearGradient id="pcg" x1="0" y1="0" x2="1" y2="1"><stop offset="0" stop-color="#21d789"/><stop offset=".5" stop-color="#9ad43a"/><stop offset="1" stop-color="#fcf84a"/></linearGradient></defs><path d="M2 3l9-2l7 1l6 6l-1 9l-4 7l-10 2l-7-5l-2-12z" fill="url(#pcg)"/><path d="M18 5l7 3l-4 5z" fill="#14a9f0"/><rect x="5.500" y="5" width="16" height="16" fill="#000"/></svg>
<div id="t77" class="t" style="left:679.8px;top:736.2px;color:#ffffff;font-size:9.5px;font-weight:700;letter-spacing:-0.352px;line-height:10px;height:10px;">PC</div>
<div class="abs" style="left:680.0px;top:748.8px;width:5.5px;height:1.5px;background:#ffffff;"></div>
<div class="abs" style="left:677.0px;top:759.5px;width:16.0px;height:3.0px;background:#4cc2ff;border-radius:1.5px"></div>
<svg style="left:717.0px;top:732.5px;" width="25" height="23" viewBox="0 0 25 23"><path d="M0 2.500c0-1 .700-1.700 1.700-1.700h6.800l2.500 2.700h12.300c1 0 1.700.700 1.700 1.700v3H0z" fill="#e8a91c"/><path d="M0 6.500h25v14.800c0 1-.700 1.700-1.700 1.700H1.700c-1 0-1.700-.700-1.700-1.700z" fill="#fcd254"/><rect x="6" y="15.500" width="13" height="7.500" fill="#1b73d2"/><rect x="9" y="17.500" width="7" height="2" fill="#3f9cf0"/></svg>
<div class="abs" style="left:727.0px;top:760.0px;width:6.0px;height:3.0px;background:#8a979b;border-radius:1.5px"></div>
<svg style="left:760.0px;top:732.0px;" width="25.5" height="24.5" viewBox="0 0 25.5 24.5"><defs><linearGradient id="cm" x1="0" y1="0" x2="0" y2="1"><stop offset="0" stop-color="#f0603a"/><stop offset="1" stop-color="#e04a2c"/></linearGradient></defs><rect x="0" y="0" width="25.500" height="24.500" rx="3.500" fill="url(#cm)"/><path d="M21.500 4.500H11a6 6 0 0 0-6 6v3.500a6 6 0 0 0 6 6h10.500v-4H12a2.500 2.500 0 0 1-2.500-2.500v-2.500A2.500 2.500 0 0 1 12 8.500h9.500z" fill="#fff"/></svg>
<div class="abs" style="left:770.0px;top:760.0px;width:6.0px;height:3.0px;background:#8a979b;border-radius:1.5px"></div>
<svg style="left:1025.5px;top:739.5px;" width="13" height="8" viewBox="0 0 13 8"><path d="M1 7l5.500-5.500L12 7" stroke="#f0f0f0" stroke-width="1.500" fill="none"/></svg>
<svg style="left:1048.0px;top:736.0px;" width="16" height="16" viewBox="0 0 16 16"><path d="M4 1l4 2.500l-4 2.500l-4-2.500zM12 1l4 2.500l-4 2.500l-4-2.500zM4 6.500l4 2.500l-4 2.500l-4-2.500zM12 6.500l2 1.200" fill="#e8eef2"/><path d="M4 12l4-2l0 3.500z" fill="#e8eef2"/><circle cx="11.500" cy="11" r="4.200" fill="#2f7fe0"/><path d="M9.500 11l1.500 1.500l2.700-3" stroke="#fff" stroke-width="1.100" fill="none"/></svg>
<svg style="left:1078.0px;top:735.5px;" width="10" height="17" viewBox="0 0 10 17"><rect x="2.800" y="0.700" width="4.400" height="9.600" rx="2.200" fill="#1d5666" stroke="#6cc8dc" stroke-width="1.200"/><path d="M0.600 7.500a4.400 4.400 0 0 0 8.800 0M5 12v3.500" stroke="#6cc8dc" stroke-width="1.200" fill="none"/></svg>
<div class="abs" style="left:1108.500px;top:733px;width:15px;height:22px;line-height:22px;text-align:center;font-family:&quot;Liberation Serif&quot;,serif;font-weight:700;font-size:20.500px;color:#f2f2f2;transform:scaleX(.74)">A</div>
<svg style="left:1145.0px;top:736.0px;" width="17" height="17" viewBox="0 0 17 17"><circle cx="7.500" cy="7.500" r="7.500" fill="#2b7de0"/><circle cx="13.500" cy="12" r="2.500" fill="#e54b3c"/><circle cx="10" cy="14" r="1.800" fill="#f2b824"/></svg>
<svg style="left:1184.0px;top:736.0px;" width="17" height="14" viewBox="0 0 17 14"><path d="M1 5a10.500 10.500 0 0 1 15 0M3.500 8a7 7 0 0 1 10 0M6 10.800a3.500 3.500 0 0 1 5 0" stroke="#f2f2f2" stroke-width="1.500" fill="none"/><circle cx="8.500" cy="12.800" r="1.200" fill="#f2f2f2"/></svg>
<svg style="left:1207.5px;top:736.5px;" width="17" height="14" viewBox="0 0 17 14"><path d="M0.700 4.800h3l4-3.800v12l-4-3.800h-3z" fill="none" stroke="#f2f2f2" stroke-width="1.300"/><path d="M10 4.500a3.500 3.500 0 0 1 0 5M12 2.500a6.500 6.500 0 0 1 0 9M14 0.800a9 9 0 0 1 0 12.400" stroke="#f2f2f2" stroke-width="1.200" fill="none"/></svg>
<svg style="left:1232.5px;top:737.0px;" width="16" height="13" viewBox="0 0 16 13"><rect x="3.500" y="2" width="11" height="9" rx="1.500" fill="none" stroke="#f2f2f2" stroke-width="1.300"/><rect x="5.500" y="4" width="7" height="5" fill="#f2f2f2"/><path d="M15.200 5v3" stroke="#f2f2f2" stroke-width="1.500"/><path d="M0.800 1v5M3 1v5M0 5.500h4v2.500h-4zM2 8v3" stroke="#f2f2f2" stroke-width="1.100" fill="none"/></svg>
<div id="t78" class="t" style="left:1297.0px;top:728.3px;color:#ffffff;font-size:11.84px;font-weight:400;letter-spacing:-0.420px;line-height:16px;height:16px;">20:53</div>
<div id="t79" class="t" style="left:1264.0px;top:743.5px;color:#ffffff;font-size:12.2px;font-weight:400;letter-spacing:-0.050px;line-height:16px;height:16px;">2022/07/04</div>
<svg style="left:1334.0px;top:738.0px;" width="13" height="14" viewBox="0 0 13 14"><path d="M8 0.800a6.500 6.500 0 1 0 4.500 9.500a5.500 5.500 0 0 1-4.500-9.500z" fill="none" stroke="#f2f2f2" stroke-width="1.200"/></svg>
</body>
</html>
